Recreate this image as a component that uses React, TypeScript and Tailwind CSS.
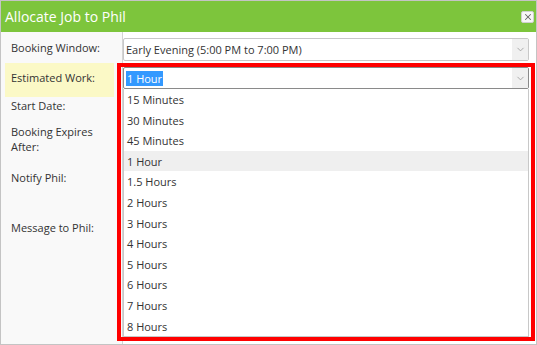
import { ChevronDown, X } from "lucide-react";

const durations = [
  "15 Minutes",
  "30 Minutes",
  "45 Minutes",
  "1 Hour",
  "1.5 Hours",
  "2 Hours",
  "3 Hours",
  "4 Hours",
  "5 Hours",
  "6 Hours",
  "7 Hours",
  "8 Hours",
];

function SelectBox({ focused, children }: { focused?: boolean; children: React.ReactNode }) {
  return (
    <div
      className={`flex items-stretch rounded-[2px] border bg-white ${
        focused ? "h-[22px] border-[#8a8a8a]" : "h-[23px] border-[#c8c8c8]"
      }`}
    >
      <div className="flex flex-1 items-center pl-[2px] pt-[1px] text-[11px] text-[#333]">{children}</div>
      <div className="flex w-[16px] items-center justify-center bg-[#f0f0f0]">
        <ChevronDown className="h-[11px] w-[11px] text-[#999]" strokeWidth={1.75} />
      </div>
    </div>
  );
}

export default function App() {
  return (
    <div
      className="relative h-[345px] w-[537px] overflow-hidden border border-[#c4c4c4] bg-white"
      style={{ fontFamily: '"Open Sans", "Noto Sans", sans-serif' }}
    >
      {/* Header */}
      <div className="flex h-[31px] items-center justify-between bg-[#7dc53c] pl-[4px] pr-[2px]">
        <span className="text-[14px] text-white">Allocate Job to Phil</span>
        <button className="flex h-[12px] w-[13px] items-center justify-center rounded-[2px] border border-[#d0d0d0] bg-[#f7f7f7]">
          <X className="h-[10px] w-[10px] text-[#666]" strokeWidth={2.5} />
        </button>
      </div>

      {/* Body */}
      <div className="relative flex h-[312px]">
        <div className="w-[122px] border-r border-[#d4d4d4] bg-[#f9f9f9] pl-[4px] pr-[8px] text-[11px] leading-[15px] text-[#333]">
          <div className="h-[31px] pl-[6px] pt-[8px]">Booking Window:</div>
          <div className="h-[34px] bg-[#fbf9c6] pl-[6px] pt-[7px]">Estimated Work:</div>
          <div className="h-[27px] pl-[6px] pt-[1px]">Start Date:</div>
          <div className="h-[45px] pl-[6px]">
            <div className="h-[15px]">Booking Expires</div>
            <div className="h-[15px]">After:</div>
          </div>
          <div className="h-[50px] pl-[6px] pt-[1px]">Notify Phil:</div>
          <div className="pl-[6px] pt-[1px]">Message to Phil:</div>
        </div>

        <div className="relative flex-1 pr-[7px] pt-[6px]">
          <SelectBox>Early Evening (5:00 PM to 7:00 PM)</SelectBox>
          <div className="mt-[6px]">
            <SelectBox focused>
              <span className="bg-[#3399ff] px-[1px] leading-[15px] text-white">1 Hour</span>
            </SelectBox>
          </div>

          {/* Open dropdown list */}
          <div className="absolute left-0 right-[7px] top-[57px] border border-t-0 border-[#c8c8c8] bg-white">
            {durations.map((d) => (
              <div
                key={d}
                className={`flex h-[20.6px] items-center pl-[3px] pt-[2px] text-[11px] text-[#333] ${
                  d === "1 Hour" ? "bg-[#efefef]" : ""
                }`}
              >
                {d}
              </div>
            ))}
          </div>
        </div>
      </div>

      {/* Highlight annotation */}
      <div className="pointer-events-none absolute left-[116px] top-[62px] h-[278px] w-[418px] border-4 border-[#ff0000]" />
    </div>
  );
}
